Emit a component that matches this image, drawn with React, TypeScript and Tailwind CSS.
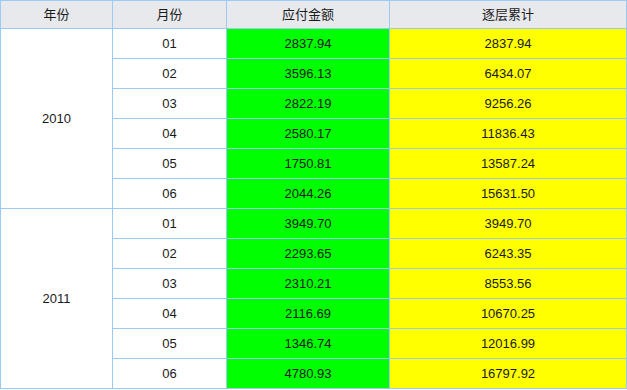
import React from 'react'

const data: { year: string; rows: [string, string, string][] }[] = [
  {
    year: '2010',
    rows: [
      ['01', '2837.94', '2837.94'],
      ['02', '3596.13', '6434.07'],
      ['03', '2822.19', '9256.26'],
      ['04', '2580.17', '11836.43'],
      ['05', '1750.81', '13587.24'],
      ['06', '2044.26', '15631.50'],
    ],
  },
  {
    year: '2011',
    rows: [
      ['01', '3949.70', '3949.70'],
      ['02', '2293.65', '6243.35'],
      ['03', '2310.21', '8553.56'],
      ['04', '2116.69', '10670.25'],
      ['05', '1346.74', '12016.99'],
      ['06', '4780.93', '16797.92'],
    ],
  },
]

const cell = 'border border-[#9ccaf7] text-center p-0'

export default function App() {
  return (
    <div className="bg-white w-[627px] h-[390px] font-['Liberation_Sans','Noto_Sans_CJK_SC',sans-serif] text-[13px] text-[#1a1a1a]">
      <table className="w-[626px] table-fixed border-collapse">
        <colgroup>
          <col className="w-[112px]" />
          <col className="w-[114px]" />
          <col className="w-[163px]" />
          <col className="w-[237px]" />
        </colgroup>
        <thead>
          <tr className="h-[28px] bg-[#e7e9ed]">
            <th className={`${cell} font-normal`}>年份</th>
            <th className={`${cell} font-normal`}>月份</th>
            <th className={`${cell} font-normal`}>应付金额</th>
            <th className={`${cell} font-normal`}>逐层累计</th>
          </tr>
        </thead>
        <tbody>
          {data.map((g) =>
            g.rows.map((r, i) => (
              <tr key={g.year + r[0]} className="h-[30px]">
                {i === 0 && (
                  <td rowSpan={6} className={`${cell} bg-white`}>
                    {g.year}
                  </td>
                )}
                <td className={`${cell} bg-white`}>{r[0]}</td>
                <td className={`${cell} bg-[#00ff00]`}>{r[1]}</td>
                <td className={`${cell} bg-[#ffff00]`}>{r[2]}</td>
              </tr>
            ))
          )}
        </tbody>
      </table>
    </div>
  )
}
